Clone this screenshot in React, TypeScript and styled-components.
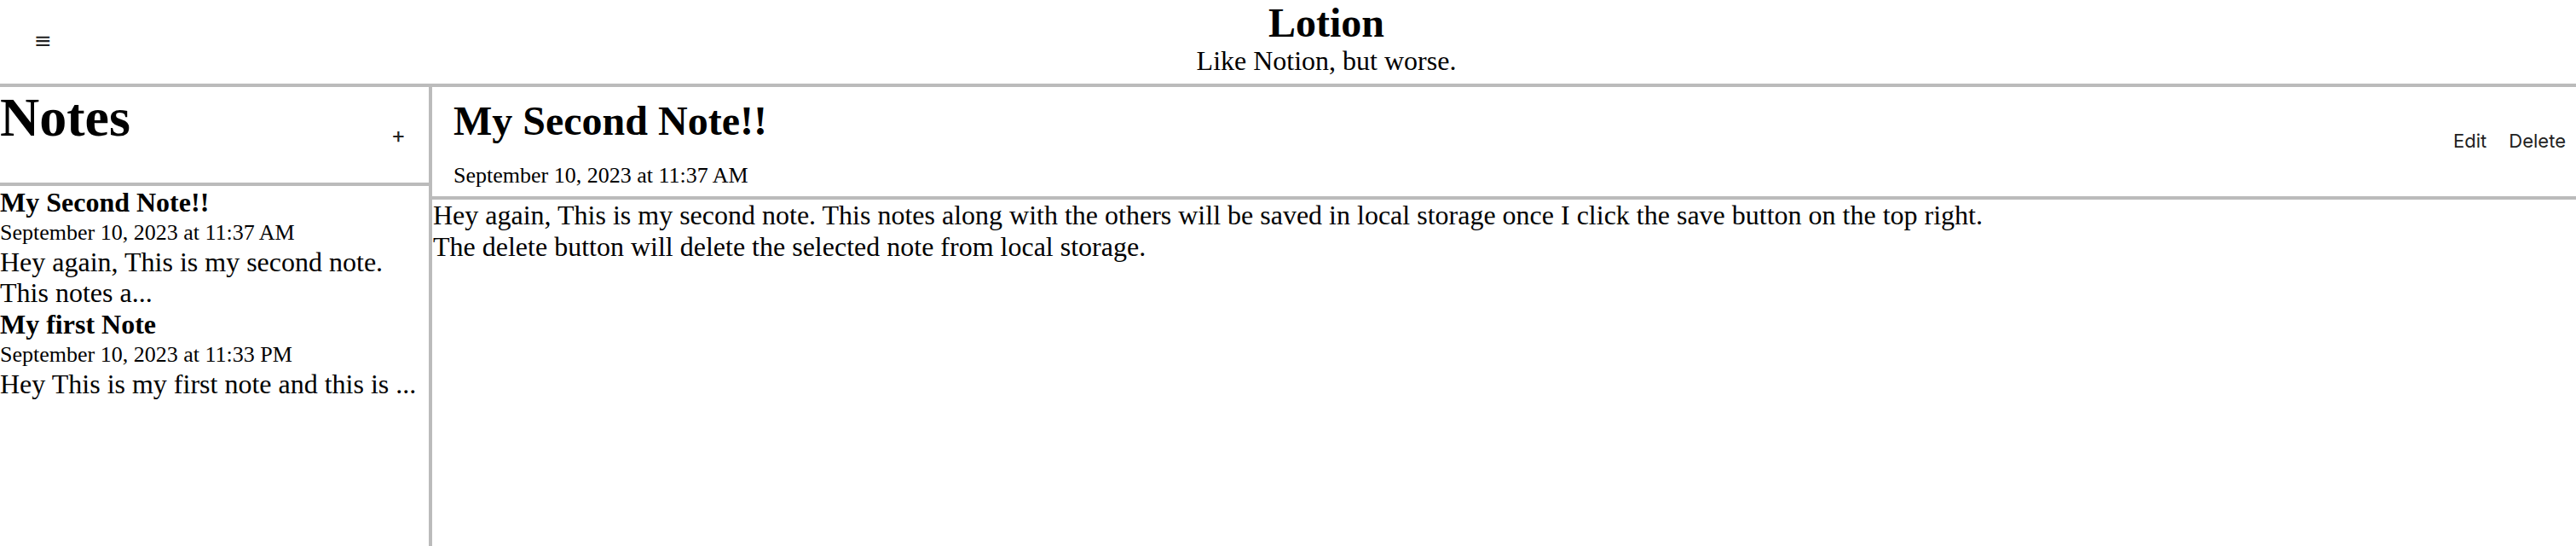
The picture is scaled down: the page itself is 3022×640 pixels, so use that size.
import React from "react";
import styled, { createGlobalStyle } from "styled-components";

const GlobalStyle = createGlobalStyle`
  html, body {
    margin: 0;
    padding: 0;
    background: #ffffff;
    color: #000000;
    font-family: "Liberation Serif", "Times New Roman", serif;
  }
  * { box-sizing: border-box; }
`;

const Page = styled.div`
  display: flex;
  flex-direction: column;
  min-height: 640px;
`;

const Header = styled.header`
  display: flex;
  align-items: flex-start;
  height: 102px;
  border-bottom: 4px solid #bbbbbb;
`;

const PlainButton = styled.button`
  background: none;
  border: none;
  margin: 0;
  padding: 0 12px;
  font-family: "Inter", "DejaVu Sans", sans-serif;
  font-size: 22px;
  line-height: 26px;
  color: #222222;
  cursor: pointer;
`;

const MenuButton = styled(PlainButton)`
  flex: 0 0 90px;
  text-align: left;
  padding: 0 0 0 40px;
  margin-top: 35px;
  font-family: "DejaVu Sans", sans-serif;
  font-size: 25px;
`;

const AddButton = styled(PlainButton)`
  font-size: 26px;
  padding: 0 11px;
`;

const TitleBlock = styled.div`
  flex: 1;
  text-align: center;
`;

const AppTitle = styled.h1`
  margin: 0;
  font-size: 48px;
  line-height: 53px;
  font-weight: bold;
`;

const Subtitle = styled.div`
  font-size: 32px;
  line-height: 36px;
`;

const Main = styled.main`
  flex: 1;
  display: flex;
`;

const Sidebar = styled.aside`
  flex: 0 0 507px;
  border-right: 4px solid #bbbbbb;
  display: flex;
  flex-direction: column;
`;

const SidebarHeader = styled.div`
  height: 116px;
  border-bottom: 4px solid #bbbbbb;
  display: flex;
  justify-content: space-between;
  align-items: center;
  padding-right: 16px;
`;

const SidebarTitle = styled.h1`
  align-self: flex-start;
  margin: 0;
  font-size: 64px;
  line-height: 71px;
  font-weight: bold;
`;

const NoteList = styled.div`
  display: flex;
  flex-direction: column;
`;

const NoteItem = styled.div`
  display: flex;
  flex-direction: column;
  cursor: pointer;
`;

const NoteTitle = styled.div`
  font-size: 32px;
  line-height: 38px;
  font-weight: bold;
`;

const NoteDate = styled.div`
  font-size: 26px;
  line-height: 34px;
`;

const NotePreview = styled.div`
  font-size: 32px;
  line-height: 35.5px;
`;

const Editor = styled.section`
  flex: 1;
  display: flex;
  flex-direction: column;
`;

const EditorHeader = styled.div`
  height: 132px;
  border-bottom: 4px solid #bbbbbb;
  display: flex;
  justify-content: space-between;
  align-items: center;
`;

const EditorHeading = styled.div`
  align-self: flex-start;
  display: flex;
  flex-direction: column;
  padding: 13px 0 0 25px;
`;

const EditorTitle = styled.h1`
  margin: 0;
  font-size: 48px;
  line-height: 53px;
  font-weight: bold;
`;

const EditorDate = styled.div`
  margin-top: 23px;
  font-size: 26px;
  line-height: 30px;
`;

const Actions = styled.div`
  display: flex;
  gap: 2px;
  margin-top: -2px;
`;

const Content = styled.div`
  padding: 0 0 0 1px;
  font-size: 32px;
  line-height: 37px;
`;

const notes = [
  {
    id: 2,
    title: "My Second Note!!",
    date: "September 10, 2023 at 11:37 AM",
    preview: "Hey again, This is my second note. This notes a...",
  },
  {
    id: 1,
    title: "My first Note",
    date: "September 10, 2023 at 11:33 PM",
    preview: "Hey This is my first note and this is ...",
  },
];

export default function App() {
  return (
    <>
      <GlobalStyle />
      <Page>
        <Header>
          <MenuButton>≡</MenuButton>
          <TitleBlock>
            <AppTitle>Lotion</AppTitle>
            <Subtitle>Like Notion, but worse.</Subtitle>
          </TitleBlock>
        </Header>
        <Main>
          <Sidebar>
            <SidebarHeader>
              <SidebarTitle>Notes</SidebarTitle>
              <AddButton>+</AddButton>
            </SidebarHeader>
            <NoteList>
              {notes.map((n) => (
                <NoteItem key={n.id}>
                  <NoteTitle>{n.title}</NoteTitle>
                  <NoteDate>{n.date}</NoteDate>
                  <NotePreview>{n.preview}</NotePreview>
                </NoteItem>
              ))}
            </NoteList>
          </Sidebar>
          <Editor>
            <EditorHeader>
              <EditorHeading>
                <EditorTitle>My Second Note!!</EditorTitle>
                <EditorDate>September 10, 2023 at 11:37 AM</EditorDate>
              </EditorHeading>
              <Actions>
                <PlainButton>Edit</PlainButton>
                <PlainButton>Delete</PlainButton>
              </Actions>
            </EditorHeader>
            <Content>
              Hey again, This is my second note. This notes along with the
              others will be saved in local storage once I click the save
              button on the top right.
              <br />
              The delete button will delete the selected note from local
              storage.
            </Content>
          </Editor>
        </Main>
      </Page>
    </>
  );
}
